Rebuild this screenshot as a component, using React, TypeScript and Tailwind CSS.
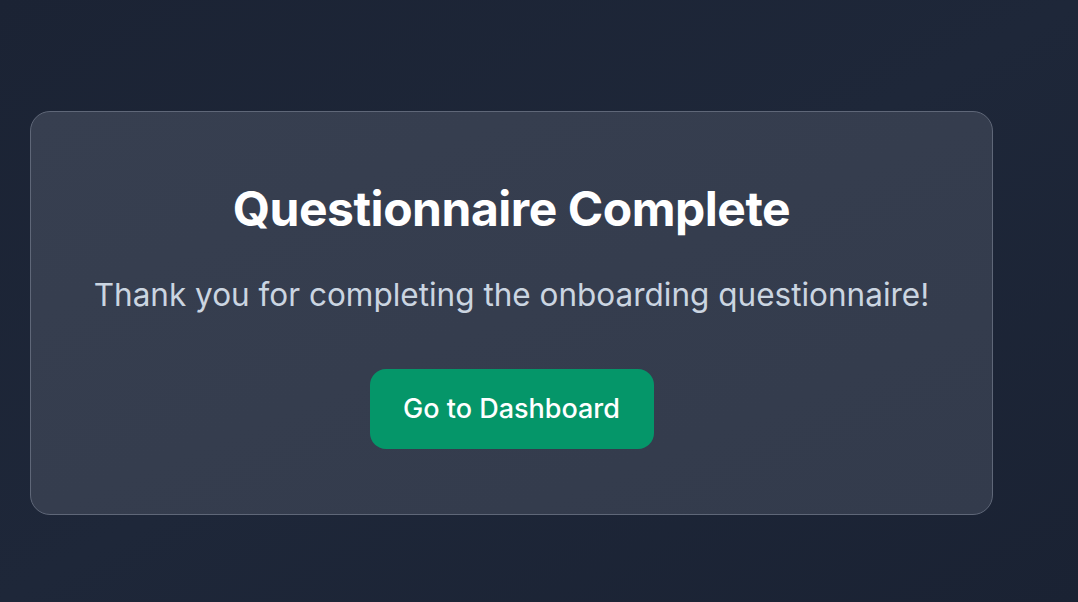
export default function App() {
    return (
        <div
            className="min-h-screen w-full bg-gradient-to-br from-[#1b2334] via-[#1e2739] to-[#1a2233] pt-[111px] pl-[30px]"
            style={{ fontFamily: 'Inter, "Noto Sans", sans-serif' }}
        >
            <div className="w-[963px] h-[404px] rounded-[20px] border border-[#5f6778] bg-gradient-to-br from-[#373f50] to-[#333b4c] flex flex-col items-center pt-[73px]">
                <h1 className="text-[48px] leading-[48px] font-bold text-white tracking-[-0.01em]">
                    Questionnaire Complete
                </h1>
                <p className="mt-[44px] text-[31.5px] leading-[36px] text-[#cbd5e1]">
                    Thank you for completing the onboarding questionnaire!
                </p>
                <button className="mt-[56px] w-[284px] h-[80px] rounded-[16px] bg-[#059669] text-white text-[27px] font-medium">
                    Go to Dashboard
                </button>
            </div>
        </div>
    );
}
